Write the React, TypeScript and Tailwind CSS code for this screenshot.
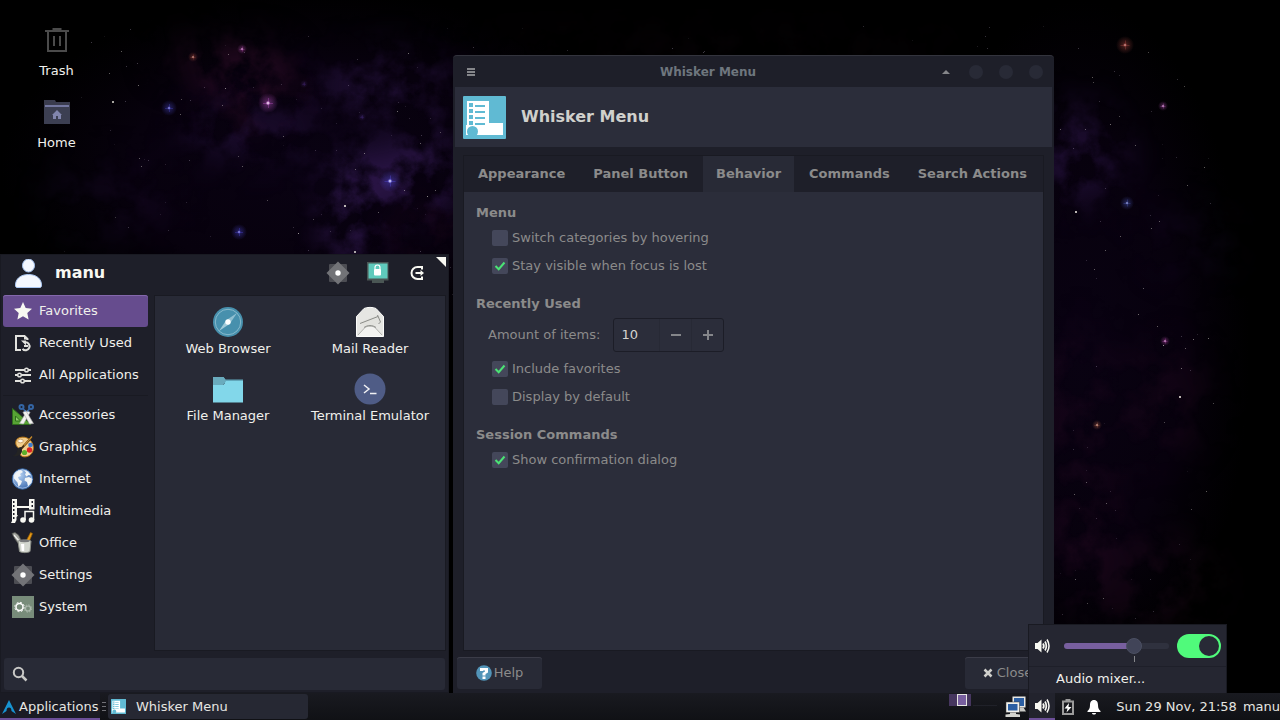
import { useState } from 'react';
import type { ReactNode } from 'react';

type Glow = { x: number; y: number; r: number; color: string };

const brightStars: Glow[] = [
  { x: 268, y: 103, r: 10, color: '#c65ad0' },
  { x: 390, y: 181, r: 11, color: '#5a50e8' },
  { x: 169, y: 108, r: 8, color: '#4a48c8' },
  { x: 242, y: 49, r: 5, color: '#b04aa8' },
  { x: 193, y: 57, r: 5, color: '#a0483c' },
  { x: 239, y: 232, r: 8, color: '#4c48d8' },
  { x: 1125, y: 45, r: 9, color: '#b04a44' },
  { x: 1163, y: 106, r: 5, color: '#b050b0' },
  { x: 1127, y: 203, r: 7, color: '#4a58b8' },
  { x: 1165, y: 341, r: 5, color: '#b048a8' },
  { x: 1097, y: 425, r: 5, color: '#b06048' },
  { x: 304, y: 84, r: 4, color: '#3a2060' },
  { x: 362, y: 117, r: 4, color: '#3a2268' },
];

const smallStars = [
  [112, 101, 0.9], [225, 88, 0.7], [138, 85, 0.6], [121, 51, 0.5], [344, 205, 1], [298, 233, 0.8],
  [354, 251, 0.9], [139, 158, 0.5], [141, 166, 0.5], [408, 53, 0.6], [397, 111, 0.6], [427, 196, 0.7],
  [378, 212, 0.5], [435, 190, 0.5], [404, 190, 0.6], [364, 153, 0.6], [355, 169, 0.5], [283, 136, 0.5],
  [242, 166, 0.5], [180, 114, 0.5], [222, 105, 0.5], [181, 99, 0.4], [109, 73, 0.5], [228, 54, 0.5],
  [420, 143, 0.5], [440, 132, 0.4], [115, 217, 0.3], [238, 156, 0.4], [313, 219, 0.4], [267, 200, 0.4],
  [1075, 211, 1], [1179, 396, 1], [1163, 345, 0.8], [1138, 314, 0.6], [1157, 326, 0.5], [1193, 339, 0.6],
  [1208, 338, 0.6], [1185, 348, 0.5], [1181, 368, 0.6], [1110, 124, 0.6], [1085, 129, 0.5], [1135, 145, 0.5],
  [1187, 185, 0.5], [1204, 167, 0.5], [1151, 228, 0.5], [1159, 221, 0.5], [1120, 236, 0.5], [1105, 250, 0.5],
  [1094, 269, 0.5], [1143, 288, 0.5], [1164, 422, 0.4], [1213, 403, 0.4], [1086, 482, 0.5], [1074, 494, 0.5],
  [1206, 491, 0.5], [1106, 503, 0.5], [1191, 509, 0.4], [1103, 598, 0.5], [1075, 579, 0.5], [1087, 603, 0.4],
  [1092, 77, 0.5], [1093, 82, 0.4], [1184, 86, 0.4], [1148, 52, 0.4], [1119, 116, 0.4], [1060, 129, 0.5],
];

function seeded(seed: number) {
  let s = seed;
  return () => {
    s = (s * 16807) % 2147483647;
    return s / 2147483647;
  };
}

const rand = seeded(421);
const dust = Array.from({ length: 320 }, () => ({
  x: Math.round(60 + rand() * 1150),
  y: Math.round(25 + rand() * 600),
  o: 0.08 + rand() * 0.22,
}));

function Wallpaper() {
  return (
    <svg className="absolute inset-0 h-full w-full" viewBox="0 0 1280 720" preserveAspectRatio="xMidYMid slice" aria-hidden="true">
      <defs>
        <radialGradient id="haze">
          <stop offset="0" stopColor="#090212" />
          <stop offset=".6" stopColor="#07010d" />
          <stop offset="1" stopColor="#05010a" stopOpacity="0" />
        </radialGradient>
        <filter id="soft" x="-100%" y="-100%" width="300%" height="300%" colorInterpolationFilters="sRGB">
          <feGaussianBlur stdDeviation="18" />
        </filter>
        <filter id="clouds" x="0" y="0" width="100%" height="100%" colorInterpolationFilters="sRGB">
          <feTurbulence type="fractalNoise" baseFrequency="0.03" numOctaves="7" seed="11" />
          <feColorMatrix values="0 0 0 0 0.2  0 0 0 0 0.1  0 0 0 0 0.33  3.2 0 0 0 -1.2" />
        </filter>
        <filter id="rose" x="0" y="0" width="100%" height="100%" colorInterpolationFilters="sRGB">
          <feTurbulence type="fractalNoise" baseFrequency="0.03" numOctaves="7" seed="5" />
          <feColorMatrix values="0 0 0 0 0.22  0 0 0 0 0.06  0 0 0 0 0.18  3.2 0 0 0 -1.2" />
        </filter>
        <mask id="purpleMask">
          <g filter="url(#soft)" fill="#fff">
            <ellipse cx="380" cy="178" rx="62" ry="32" opacity=".75" />
            <ellipse cx="430" cy="170" rx="32" ry="50" opacity=".5" />
            <ellipse cx="385" cy="85" rx="75" ry="35" opacity=".45" />
            <ellipse cx="352" cy="225" rx="30" ry="40" opacity=".7" />
            <ellipse cx="250" cy="130" rx="70" ry="30" opacity=".4" />
            <ellipse cx="110" cy="200" rx="70" ry="40" opacity=".15" />
            <ellipse cx="1075" cy="155" rx="50" ry="50" opacity=".45" />
            <ellipse cx="1190" cy="240" rx="50" ry="40" opacity=".1" />
          </g>
        </mask>
        <mask id="roseMask">
          <g filter="url(#soft)" fill="#fff">
            <ellipse cx="250" cy="80" rx="45" ry="38" opacity=".6" />
            <ellipse cx="195" cy="60" rx="40" ry="18" opacity=".3" />
            <ellipse cx="430" cy="235" rx="40" ry="30" opacity=".25" />
            <ellipse cx="1075" cy="460" rx="45" ry="140" opacity=".22" />
            <ellipse cx="1165" cy="400" rx="45" ry="60" opacity=".2" />
            <ellipse cx="1140" cy="580" rx="80" ry="50" opacity=".22" />
            <ellipse cx="700" cy="45" rx="260" ry="10" opacity=".15" />
          </g>
        </mask>
        {brightStars.map((s, i) => (
          <radialGradient id={`star${i}`} key={i}>
            <stop offset="0" stopColor={s.color} />
            <stop offset=".25" stopColor={s.color} stopOpacity=".35" />
            <stop offset="1" stopColor={s.color} stopOpacity="0" />
          </radialGradient>
        ))}
      </defs>
      <rect width="1280" height="720" fill="#000" />
      <ellipse cx="320" cy="170" rx="320" ry="180" fill="url(#haze)" />
      <ellipse cx="1080" cy="350" rx="170" ry="350" fill="url(#haze)" />
      <g mask="url(#purpleMask)">
        <rect width="1280" height="720" filter="url(#clouds)" />
      </g>
      <g mask="url(#roseMask)">
        <rect width="1280" height="720" filter="url(#rose)" />
      </g>
      {dust.map((d, i) => (
        <rect key={i} x={d.x} y={d.y} width="1" height="1" fill="#d8c8e8" opacity={d.o} />
      ))}
      {smallStars.map(([x, y, o], i) => (
        <rect key={i} x={x} y={y} width={o > 0.8 ? 2 : 1} height={o > 0.8 ? 2 : 1} fill="#e8e4dc" opacity={o * 0.8} />
      ))}
      {brightStars.map((s, i) => (
        <g key={i}>
          <circle cx={s.x} cy={s.y} r={s.r} fill={`url(#star${i})`} />
          <path
            d={`M${s.x - s.r / 2} ${s.y + 0.5}h${s.r}M${s.x + 0.5} ${s.y - s.r / 2}v${s.r}`}
            stroke={s.color}
            strokeOpacity=".35"
          />
          {s.r > 4 && <circle cx={s.x} cy={s.y} r={s.r > 9 ? 1.5 : 0.8} fill="#fff" opacity=".6" />}
        </g>
      ))}
    </svg>
  );
}

function TrashIcon() {
  return (
    <svg width="28" height="32" viewBox="0 0 28 32" fill="none" stroke="#4b4b4b" strokeWidth="2" aria-hidden="true">
      <path d="M2 7h24M5 7v20h18V7M10.500 6V5h7v1M11 12v10M17 12v10" />
    </svg>
  );
}

function HomeFolderIcon() {
  return (
    <svg width="28" height="32" viewBox="0 0 28 32" aria-hidden="true">
      <path d="M1 4h11l1 2h14v22H1z" fill="#3a3c4e" />
      <path d="M2 9h24v2H2z" fill="#7377a0" />
      <path d="M1 11h26v16a1 1 0 0 1-1 1H2a1 1 0 0 1-1-1z" fill="#3c3f52" />
      <path d="M14 14l5 5h-1v4h-3v-3h-2v3h-3v-4H9z" fill="#8185ad" />
    </svg>
  );
}

function UserIcon() {
  return (
    <svg width="28" height="32" viewBox="0 0 28 32" aria-hidden="true">
      <g fill="#f4f7fe" stroke="#a9c6f2">
        <ellipse cx="13.500" cy="6.500" rx="6" ry="6.500" />
        <path d="M.5 26c0-6 5-10.500 13-10.500s13 4.500 13 10.500c0 1.500-.3 2.500-1.500 2.500H2C.8 28.500.5 27.500.5 26z" />
      </g>
    </svg>
  );
}

function GearIcon() {
  return (
    <svg width="24" height="24" viewBox="0 0 24 24" aria-hidden="true">
      <rect x="3" y="3" width="18" height="18" rx="1" fill="#4c4d53" />
      <path d="M12 .5L23.500 12 12 23.500.5 12z" fill="#727377" />
      <circle cx="12" cy="12" r="2.700" fill="#fff" />
    </svg>
  );
}

function LockScreenIcon() {
  return (
    <svg width="24" height="24" viewBox="0 0 24 24" aria-hidden="true">
      <path d="M6 19h12v3H6z" fill="#4a5654" />
      <path d="M1 1h21.500v18.500H1z" fill="#4a5654" />
      <path d="M2.500 2.500h19v15h-19z" fill="#5fcabc" />
      <path d="M9 8.500V6.500a2.500 2.500 0 0 1 5 0v2" fill="none" stroke="#fff" strokeWidth="1.200" />
      <rect x="8" y="8" width="7" height="6.500" rx="1" fill="#fff" />
    </svg>
  );
}

function LogoutIcon() {
  return (
    <svg width="24" height="24" viewBox="0 0 24 24" fill="none" stroke="#f8f8f2" strokeWidth="2" aria-hidden="true">
      <path d="M16 8.500V6H11.500A6 6 0 0 0 11.500 18H16V15.500M9.500 12H16" />
      <path d="M14.500 9l3.500 3-3.500 3z" fill="#f8f8f2" stroke="none" />
    </svg>
  );
}

function StarIcon() {
  return (
    <svg width="24" height="24" viewBox="0 0 24 24" aria-hidden="true">
      <path d="M12 3l2.700 5.900 6.300.8-4.700 4.300 1.300 6.500-5.600-3.200-5.600 3.200L7.700 14 3 9.700l6.300-.8z" fill="#f8f8f2" />
    </svg>
  );
}

function RecentIcon() {
  return (
    <svg width="24" height="24" viewBox="0 0 24 24" fill="none" stroke="#e2e2de" strokeWidth="2" aria-hidden="true">
      <path d="M10 19H5V5h8.500l3 3v1" />
      <path d="M13 4.500v4h4z" fill="#e2e2de" stroke="none" />
      <path d="M14 11.300a4 4 0 1 1-2.500 6.500M17 15h-4" />
      <path d="M10 9.500h5v5z" fill="#e2e2de" stroke="none" />
    </svg>
  );
}

function SlidersIcon() {
  return (
    <svg width="24" height="24" viewBox="0 0 24 24" stroke="#e2e2de" strokeWidth="2" fill="#1e1f29" aria-hidden="true">
      <path d="M4 7h16M4 12h16M4 18h16" />
      <circle cx="15.500" cy="7" r="1.800" strokeWidth="1.500" />
      <circle cx="8.500" cy="12" r="1.800" strokeWidth="1.500" />
      <circle cx="11.500" cy="18" r="1.800" strokeWidth="1.500" />
    </svg>
  );
}

function AccessoriesIcon() {
  return (
    <svg width="24" height="24" viewBox="0 0 24 24" fill="none" aria-hidden="true">
      <path d="M1.500 5.500L20 21.500H1.500z" fill="#57a434" stroke="#2f6b1d" />
      <path d="M4.500 13l5 5h-5z" fill="#8fd068" stroke="#2f6b1d" />
      <path d="M8.500 20.500L16.500 7l2.500 2.500L12.500 21z" fill="#f2f2f0" stroke="#a8a8a8" strokeWidth=".6" />
      <path d="M22.500 20.500L14.500 7 12 9.500 18.500 21z" fill="#f2f2f0" stroke="#a8a8a8" strokeWidth=".6" />
      <circle cx="10.500" cy="4" r="2" stroke="#3465a4" strokeWidth="2" />
      <circle cx="20" cy="4" r="2" stroke="#3465a4" strokeWidth="2" />
      <path d="M12 5.500l2.500 3M18.500 5.500l-2 3" stroke="#3465a4" strokeWidth="1.500" />
    </svg>
  );
}

function GraphicsIcon() {
  return (
    <svg width="24" height="24" viewBox="0 0 24 24" aria-hidden="true">
      <path
        d="M5 6c1-4 8-5 12-2.500 5 3 6.500 9 4.500 13.500-2 4.500-8 6-11 4-2.500-2 .5-5-1.500-7C7 12.500 4 11 5 6z"
        fill="#f3cd8b"
        stroke="#b87512"
      />
      <ellipse cx="9.500" cy="6" rx="2.800" ry="1.800" fill="#fff8e8" stroke="#b08040" strokeWidth=".6" />
      <circle cx="19.500" cy="10" r="2.300" fill="#3f7ed0" />
      <circle cx="18.500" cy="15" r="2.700" fill="#dc2424" />
      <circle cx="13.500" cy="17.500" r="2.600" fill="#5cb02a" />
      <path d="M20 3L9.500 14.500" stroke="#4a3010" strokeWidth="2" />
      <path d="M21 1.500L13 10.500" stroke="#c78a2c" strokeWidth="1.200" />
      <path d="M10.500 12c-3 0-4 2-4.500 4.500S4 20 1.500 21c4 1 9-.5 9.500-5z" fill="#242424" />
    </svg>
  );
}

function InternetIcon() {
  return (
    <svg width="24" height="24" viewBox="0 0 24 24" aria-hidden="true">
      <defs>
        <radialGradient id="ocean" cx=".35" cy=".3" r=".8">
          <stop offset="0" stopColor="#b7d2f2" />
          <stop offset="1" stopColor="#3666ad" />
        </radialGradient>
      </defs>
      <circle cx="11.500" cy="12" r="10.200" fill="url(#ocean)" stroke="#3465a4" />
      <path
        d="M2.500 8C4 4.500 7.500 3 10 3l2 2-3 2 1 2-3 1 1 2.500 3 1.500-1 3-2.500 3-1-4.500-3.500-4zM13 3.200l4 1.300 3 4-2.500-.5-2 1.500-1.500-2 1-2zM14 11l4-1 3.500 2-1 4-3.500 3.500-1-4.500-2.500-1.500z"
        fill="#f1f4f6"
      />
      <circle cx="11.500" cy="12" r="9.200" fill="none" stroke="#cfe0f5" strokeOpacity=".6" />
    </svg>
  );
}

function MultimediaIcon() {
  return (
    <svg width="24" height="24" viewBox="0 0 24 24" fill="#f8f8f2" aria-hidden="true">
      <path d="M1 0h5v7h12V0h5.500v10.500H18V9H6v7l1 .5L5.500 18v3l-1.500 3H0l1-2z" />
      <path d="M2 2h1.500v2H2zM2 6h1.500v2H2zM2 10h1.500v2H2zM2 14h1.500v2H2zM2 18h1.500v2H2zM20.500 2H22v2h-1.500zM20.500 6H22v2h-1.500z" fill="#1e1f29" />
      <path d="M14 21v-8.500h8.500V21" fill="none" stroke="#f8f8f2" strokeWidth="1.500" />
      <circle cx="12" cy="21" r="2.800" />
      <circle cx="20.500" cy="21" r="2.800" />
    </svg>
  );
}

function OfficeIcon() {
  return (
    <svg width="24" height="24" viewBox="0 0 24 24" aria-hidden="true">
      <path d="M1 2.500l3-1 3.500 2.500 4 8-3.500 1.500-4-5.500z" fill="#a2a49e" stroke="#555753" strokeWidth=".8" />
      <path d="M3 4l6 7" stroke="#eeeeec" strokeWidth="1.200" />
      <path d="M19.500 1.500l2 1L18 11l-4 1z" fill="#e69a18" stroke="#8f5902" strokeWidth=".7" />
      <path d="M7 10c3-1.500 10-1.500 13 0l-1 10.500c-2 1.500-8.500 1.500-10.500 0z" fill="#d3d7cf" stroke="#8a8d86" />
      <ellipse cx="13.500" cy="10" rx="5" ry="1.200" fill="#77797a" />
      <path d="M10 13l.7 7h2.500v-7z" fill="#fff" />
    </svg>
  );
}

function SystemIcon() {
  return (
    <svg width="24" height="24" viewBox="0 0 24 24" fill="none" aria-hidden="true">
      <rect x="1" y="1" width="22" height="22" fill="#788c7a" />
      <circle cx="8.500" cy="12" r="3.500" stroke="#fff" strokeWidth="1.500" />
      <circle cx="8.500" cy="12" r="4.700" stroke="#fff" strokeWidth="1" strokeDasharray="1.900 1.800" />
      <circle cx="17" cy="13.500" r="2.500" stroke="#aebbaf" strokeWidth="1.200" />
      <circle cx="17" cy="13.500" r="3.600" stroke="#aebbaf" strokeWidth="1" strokeDasharray="1.500 1.300" />
    </svg>
  );
}

function BrowserIcon() {
  return (
    <svg width="32" height="32" viewBox="0 0 32 32" aria-hidden="true">
      <circle cx="16" cy="16" r="15" fill="#4790ad" />
      <circle cx="16" cy="16" r="12.700" fill="none" stroke="#86b9cc" />
      <path d="M25 7l-7 10.500-3.500-3.500z" fill="#8fbfd1" />
      <path d="M7 25l7-10.500 3.500 3.500z" fill="#a3cbd9" />
      <circle cx="16" cy="16" r="2.700" fill="#fff" />
    </svg>
  );
}

function MailIcon() {
  return (
    <svg width="32" height="32" viewBox="0 0 32 32" aria-hidden="true">
      <path d="M2.500 10.500L10 2.500C13 1 19 1 22 2.500l7.500 8v20h-27z" fill="#e6e6e3" stroke="#fbfbfa" />
      <path d="M6 16l18-7 2 1.500 1 5-6 4H9z" fill="#e2e2de" />
      <path d="M6 17.500L24 10.500M23.500 9l3 7-2 2" fill="none" stroke="#8b8c88" />
      <path d="M3 30l9-9.500h8l9 9.500z" fill="#f2f2f0" />
      <path d="M4 29l7-7.500c3-2 7-2 10 0l7 7.500" fill="none" stroke="#b1b2ae" />
      <path d="M10 21.500c3-2.500 9-2.500 12 0" fill="none" stroke="#8b8c88" />
    </svg>
  );
}

function FolderIcon() {
  return (
    <svg width="32" height="32" viewBox="0 0 32 32" aria-hidden="true">
      <path d="M1 4h10.500l2 2.500H31V10H1z" fill="#62a7bb" />
      <path d="M1 12h10.500L14 8h17v21.500H1z" fill="#82d7ea" />
      <path d="M1 4h10.500l2 3-2 5H1z" fill="#6aabbd" />
    </svg>
  );
}

function TerminalIcon() {
  return (
    <svg width="32" height="32" viewBox="0 0 32 32" fill="none" aria-hidden="true">
      <circle cx="16" cy="16" r="15.500" fill="#4f5c86" />
      <path d="M10 12l5 4-5 4M16 20.500h6.500" stroke="#f1f1f4" strokeWidth="1.500" />
    </svg>
  );
}

function WhiskerIcon({ size }: { size: number }) {
  return (
    <svg width={size} height={size} viewBox="0 0 43 43" aria-hidden="true">
      <rect width="43" height="43" rx="1" fill="#60bad3" />
      <path d="M4 5h22v22h14v12H3V29h1z" fill="#fff" />
      <path
        d="M6 7h4v4H6zM6 13h4v4H6zM6 19h4v4H6zM6 25h4v4H6zM12 9h10v2H12zM12 15h10v2H12zM12 21h10v2H12zM12 27h10v2H12z"
        fill="#60bad3"
      />
      <circle cx="9.500" cy="35.500" r="5.500" fill="#60bad3" />
    </svg>
  );
}

function SpeakerIcon() {
  return (
    <svg width="16" height="16" viewBox="0 0 16 16" fill="none" stroke="#f8f8f2" aria-hidden="true">
      <path d="M1 5h2.500l4-3.500v13l-4-3.500H1z" fill="#f8f8f2" stroke="none" />
      <path d="M9 5.500c1 1.500 1 3.500 0 5" strokeWidth="1.800" />
      <path d="M11 3.500c1.800 3 1.800 6 0 9" strokeWidth="1.700" />
      <path d="M13 1.500c2.500 4 2.500 9 0 13" strokeWidth="1.500" />
    </svg>
  );
}

const places = [
  { name: 'Favorites', icon: <StarIcon /> },
  { name: 'Recently Used', icon: <RecentIcon /> },
  { name: 'All Applications', icon: <SlidersIcon /> },
];

const categories = [
  { name: 'Accessories', icon: <AccessoriesIcon /> },
  { name: 'Graphics', icon: <GraphicsIcon /> },
  { name: 'Internet', icon: <InternetIcon /> },
  { name: 'Multimedia', icon: <MultimediaIcon /> },
  { name: 'Office', icon: <OfficeIcon /> },
  { name: 'Settings', icon: <GearIcon /> },
  { name: 'System', icon: <SystemIcon /> },
];

const favorites = [
  { name: 'Web Browser', icon: <BrowserIcon /> },
  { name: 'Mail Reader', icon: <MailIcon /> },
  { name: 'File Manager', icon: <FolderIcon /> },
  { name: 'Terminal Emulator', icon: <TerminalIcon /> },
];

function CategoryButton({ name, icon, active, onClick }: { name: string; icon: ReactNode; active: boolean; onClick: () => void }) {
  return (
    <button
      onClick={onClick}
      className={`flex h-8 w-full items-center gap-1 rounded-[3px] pl-2 text-left ${
        active ? 'bg-[#664c8e] shadow-[inset_0_1px_#8468ac]' : ''
      }`}
    >
      {icon}
      {name}
    </button>
  );
}

function WhiskerMenu() {
  const [category, setCategory] = useState('Favorites');

  return (
    <section className="absolute bottom-0 left-0 flex h-[439px] w-[449px] flex-col border border-[#191a22] bg-[#1e1f29] text-[#f0f0ec]">
      <header className="flex h-10 shrink-0 items-center pl-[14px]">
        <UserIcon />
        <h2 className="ml-3 flex-1 pb-1 text-base font-bold text-[#f8f8f2]">manu</h2>
        <div className="flex gap-4 pr-[18px] pb-1">
          <button aria-label="All Settings"><GearIcon /></button>
          <button aria-label="Lock Screen"><LockScreenIcon /></button>
          <button aria-label="Log Out"><LogoutIcon /></button>
        </div>
      </header>
      <svg className="absolute top-0.5 right-0.5" width="10" height="10" viewBox="0 0 10 10" aria-hidden="true">
        <path d="M0 0h10v10z" fill="#f8f8f2" />
      </svg>
      <div className="flex min-h-0 flex-1 pr-0.5 pl-0.5">
        <nav className="w-[145px] shrink-0">
          {places.map((p) => (
            <CategoryButton key={p.name} {...p} active={category === p.name} onClick={() => setCategory(p.name)} />
          ))}
          <hr className="mt-1 mb-[3px] border-[#191a22]" />
          {categories.map((c) => (
            <CategoryButton key={c.name} {...c} active={category === c.name} onClick={() => setCategory(c.name)} />
          ))}
        </nav>
        <div className="ml-1.5 grid flex-1 grid-cols-2 content-start border border-[#191a22] bg-[#282a36] pr-1 pl-0.5 pt-2.5">
          {favorites.map((app) => (
            <button key={app.name} className="flex h-[67px] flex-col items-center gap-[3px] leading-4 whitespace-nowrap">
              {app.icon}
              {app.name}
            </button>
          ))}
        </div>
      </div>
      <div className="mx-[3px] mt-[7px] mb-0.5 flex h-8 shrink-0 items-center rounded-[3px] bg-[#282a36] pl-2">
        <svg width="16" height="16" viewBox="0 0 16 16" fill="none" stroke="#c8c8c6" strokeWidth="2" aria-hidden="true">
          <circle cx="6.500" cy="6.500" r="4.700" />
          <path d="M10 10l4.500 4.500" strokeWidth="2.500" />
        </svg>
        <input aria-label="Search" className="ml-2 flex-1 bg-transparent outline-none" />
      </div>
    </section>
  );
}

function CheckRow({ label, checked = false }: { label: string; checked?: boolean }) {
  return (
    <label className="ml-4 flex h-7 w-fit items-center gap-1">
      <span className="grid h-4 w-4">
        <input
          type="checkbox"
          defaultChecked={checked}
          className="peer col-start-1 row-start-1 h-4 w-4 appearance-none rounded-[2px] bg-[#44475a]"
        />
        <svg className="invisible col-start-1 row-start-1 peer-checked:visible" width="16" height="16" viewBox="0 0 16 16" aria-hidden="true">
          <path d="M3.500 8l3.200 3.200L12.500 4.500" fill="none" stroke="#4be375" strokeWidth="2" />
        </svg>
      </span>
      {label}
    </label>
  );
}

function Section({ title, children }: { title: string; children: ReactNode }) {
  return (
    <section className="mb-4">
      <h3 className="mb-[3px] h-4 leading-4 font-bold">{title}</h3>
      {children}
    </section>
  );
}

const tabs = ['Appearance', 'Panel Button', 'Behavior', 'Commands', 'Search Actions'];

function SettingsWindow() {
  const [tab, setTab] = useState('Behavior');
  const [amount, setAmount] = useState(10);

  return (
    <section className="absolute bottom-0 left-[453px] flex h-[638px] w-[601px] flex-col rounded-t-[4px] border-t border-[#33343d] bg-[#1e1f29] text-[#8b8b8b]">
      <header className="flex h-[31px] shrink-0 items-center">
        <button aria-label="Window menu" className="flex w-[27px] justify-center pl-[9px]">
          <svg width="8" height="8" viewBox="0 0 8 8" aria-hidden="true">
            <path d="M0 0h8v2H0zM0 3h8v2H0zM0 6h8v2H0z" fill="#85868a" />
          </svg>
        </button>
        <h1 className="flex-1 text-center text-xs font-bold text-[#6e767e]">Whisker Menu</h1>
        <div className="flex items-center gap-4 pr-[11px] pl-1.5">
          <button aria-label="Shade" className="mr-[3px]">
            <svg width="8" height="4" viewBox="0 0 8 4" aria-hidden="true"><path d="M0 4l4-4 4 4z" fill="#85868a" /></svg>
          </button>
          <button aria-label="Minimize" className="h-3.5 w-3.5 rounded-full bg-[#282a36]" />
          <button aria-label="Maximize" className="h-3.5 w-3.5 rounded-full bg-[#282a36]" />
          <button aria-label="Close window" className="h-3.5 w-3.5 rounded-full bg-[#282a36]" />
        </div>
      </header>
      <div className="mx-0.5 flex h-[60px] shrink-0 items-center gap-[15px] bg-[#2b2d3a] pl-2">
        <WhiskerIcon size={43} />
        <h2 className="text-base font-bold text-[#d0d0cc]">Whisker Menu</h2>
      </div>
      <div className="mx-2.5 mt-2 flex flex-1 flex-col border border-[#191a22]">
        <div role="tablist" className="flex h-9 shrink-0 gap-0.5 pl-px">
          {tabs.map((t) => (
            <button
              key={t}
              role="tab"
              aria-selected={t === tab}
              onClick={() => setTab(t)}
              className={`px-[13px] font-bold whitespace-nowrap ${t === tab ? 'bg-[#282a36]' : ''}`}
            >
              {t}
            </button>
          ))}
        </div>
        <div role="tabpanel" className="flex-1 bg-[#2b2d3a] px-3 pt-[13px]">
          <Section title="Menu">
            <CheckRow label="Switch categories by hovering" />
            <CheckRow label="Stay visible when focus is lost" checked />
          </Section>
          <Section title="Recently Used">
            <div className="mt-1.5 mb-[3px] ml-3 flex items-center gap-[13px]">
              <label htmlFor="amount">Amount of items:</label>
              <div className="flex h-[34px] rounded-[3px] border border-[#1c1d27]">
                <input
                  id="amount"
                  value={amount}
                  onChange={(e) => setAmount(Number(e.target.value) || 0)}
                  className="w-[45px] bg-transparent pl-[7px] text-[#d4d4d0] outline-none"
                />
                <button aria-label="Decrease" onClick={() => setAmount(amount - 1)} className="grid w-8 place-items-center border-l border-[#272935]">
                  <svg width="10" height="10" viewBox="0 0 10 10" aria-hidden="true"><path d="M0 4h10v2H0z" fill="#85868a" /></svg>
                </button>
                <button aria-label="Increase" onClick={() => setAmount(amount + 1)} className="grid w-8 place-items-center border-l border-[#272935]">
                  <svg width="10" height="10" viewBox="0 0 10 10" aria-hidden="true"><path d="M0 4h4V0h2v4h4v2H6v4H4V6H0z" fill="#85868a" /></svg>
                </button>
              </div>
            </div>
            <CheckRow label="Include favorites" checked />
            <CheckRow label="Display by default" />
          </Section>
          <Section title="Session Commands">
            <CheckRow label="Show confirmation dialog" checked />
          </Section>
        </div>
      </div>
      <footer className="flex shrink-0 justify-between px-1 pt-1.5 pb-1">
        <button className="flex h-8 w-[85px] items-center justify-center gap-0.5 rounded-[3px] bg-[#282a36] shadow-[inset_0_1px_#3b3c48]">
          <svg width="16" height="16" viewBox="0 0 16 16" aria-hidden="true">
            <circle cx="8" cy="8" r="7.800" fill="#5294b8" />
            <path d="M4 6V3h8v4.500L9.500 9v1.500H6.500V8L9 6.500v-1H7V6zM6.500 11.500h3V14h-3z" fill="#fff" />
          </svg>
          Help
        </button>
        <button className="flex h-8 w-[85px] items-center justify-center gap-1 rounded-[3px] bg-[#282a36] shadow-[inset_0_1px_#3b3c48]">
          <svg width="10" height="10" viewBox="0 0 10 10" aria-hidden="true">
            <path d="M1.500 1.500l7 7M8.500 1.500l-7 7" stroke="#d0d0cc" strokeWidth="2.500" />
          </svg>
          Close
        </button>
      </footer>
    </section>
  );
}

function VolumePopup() {
  const [volume, setVolume] = useState(70);
  const fill = `linear-gradient(to right, #785f9f ${volume}%, #2f313e ${volume}%)`;

  return (
    <section className="absolute right-[53px] bottom-0 h-[69px] w-[199px] border border-b-0 border-[#191a22] bg-[#252631] text-[#f0f0ec]">
      <div className="flex h-[42px] items-center border-b border-[#1e1f29] pr-[5px] pl-[5px]">
        <SpeakerIcon />
        <div className="relative mr-2 ml-3.5 flex h-6 flex-1 items-center">
          <input
            type="range"
            aria-label="Volume"
            value={volume}
            onChange={(e) => setVolume(Number(e.target.value))}
            style={{ background: fill }}
            className="h-1.5 w-full appearance-none rounded-full [&::-webkit-slider-thumb]:h-4 [&::-webkit-slider-thumb]:w-4 [&::-webkit-slider-thumb]:appearance-none [&::-webkit-slider-thumb]:rounded-full [&::-webkit-slider-thumb]:border [&::-webkit-slider-thumb]:border-[#4b4f62] [&::-webkit-slider-thumb]:bg-[#414458]"
          />
          <span className="absolute top-[22px] left-2/3 h-1.5 w-px bg-[#85868a]" />
        </div>
        <input
          type="checkbox"
          role="switch"
          aria-label="Sound on"
          defaultChecked
          className="flex h-6 w-11 appearance-none items-center rounded-full bg-[#414458] px-0.5 before:h-5 before:w-5 before:rounded-full before:bg-[#282a36] checked:justify-end checked:bg-[#50fa7b]"
        />
      </div>
      <button className="flex h-6 w-full items-center pl-[27px]">Audio mixer...</button>
    </section>
  );
}

function NetworkIcon() {
  return (
    <svg width="22" height="22" viewBox="0 0 22 22" aria-hidden="true">
      <path d="M7.500.5h13v11h-13z" fill="#e8e8e4" />
      <path d="M9 2h10v8H9z" fill="#2c5fa3" />
      <path d="M14.500 11.500h4l2.500 4h-6.500z" fill="#c9c9c5" />
      <path d="M1 6h13.500v10.500H1z" fill="#f1f1ed" stroke="#383838" strokeWidth=".5" />
      <path d="M3 8h9.500v6.500H3z" fill="#2c5fa3" />
      <path d="M5 16.500h6V18l4 .5V21H.5v-2.500L5 18z" fill="#d4d4cf" />
    </svg>
  );
}

function Taskbar() {
  return (
    <footer className="relative flex h-[27px] shrink-0 items-stretch bg-linear-to-b from-[#191a20] to-[#101115] text-[#e6e6e2]">
      <button className="flex w-[100px] items-center gap-[3px] border-b-2 border-[#6c4f98] bg-[#1a1b24] pt-0.5 pl-0.5 whitespace-nowrap">
        <svg width="14" height="14" viewBox="0 0 14 14" aria-hidden="true">
          <path d="M7 0l7 14-4.500-3c0-2.500-1-3.500-2.500-3.500S4.500 8.500 4.500 11L0 14z" fill="#1793d1" />
        </svg>
        Applications
      </button>
      <svg className="mx-0.5 self-center" width="4" height="10" viewBox="0 0 4 10" aria-hidden="true">
        <path d="M0 0h4v1H0zM0 4h4v1H0zM0 8h4v1H0z" fill="#707076" />
      </svg>
      <button className="my-px flex w-[200px] items-center gap-2.5 rounded-[3px] bg-[#262833] pl-[3px]">
        <WhiskerIcon size={15} />
        Whisker Menu
      </button>
      <div className="ml-auto flex items-stretch">
        <button aria-label="Workspaces" className="mt-px grid w-12 grid-cols-2 grid-rows-2 self-start">
          <span className="flex h-3 w-[22px] justify-end bg-[#46365f] pr-1">
            <span className="h-full w-2.5 border border-[#e6e6e2] bg-[#785f9f]" />
          </span>
          <span className="h-3 border-b border-[#202129]" />
        </button>
        <button aria-label="Network" className="ml-2 flex w-6 items-center"><NetworkIcon /></button>
        <button aria-label="Sound" className="flex w-[26px] items-center justify-center border-b-2 border-[#6c4f98] bg-[#22232d]">
          <SpeakerIcon />
        </button>
        <button aria-label="Battery" className="flex w-[26px] items-center justify-center">
          <svg width="12" height="16" viewBox="0 0 12 16" aria-hidden="true">
            <path d="M3.500 0h5v1.500H12V16H0V1.500h3.500z" fill="#9b9b9b" />
            <path d="M2 3.500h8V14H2z" fill="#17181d" />
            <path d="M7 4L2.500 9.500H5.500L4.500 13.500 9.500 8H6.500z" fill="#fff" />
          </svg>
        </button>
        <button aria-label="Notifications" className="flex w-[26px] items-center justify-center">
          <svg width="14" height="16" viewBox="0 0 14 16" aria-hidden="true">
            <path d="M7 1c3 0 4 2.500 4 5 0 3.500 1 4.500 2.500 6v1H.5v-1C2 10.500 3 9.500 3 6c0-2.500 1-5 4-5zM5 14h4c0 1-1 1.500-2 1.500S5 15 5 14z" fill="#fff" />
          </svg>
        </button>
        <button className="ml-[9px] whitespace-nowrap">Sun 29 Nov, 21:58</button>
        <button className="ml-1.5">manu</button>
      </div>
    </footer>
  );
}

function DesktopIcon({ name, icon }: { name: string; icon: ReactNode }) {
  return (
    <button className="flex h-[72px] w-20 flex-col items-center gap-[7px] text-[#f0f0ec]">
      {icon}
      {name}
    </button>
  );
}

function App() {
  return (
    <div className="relative flex h-screen flex-col overflow-hidden bg-black font-['DejaVu_Sans',sans-serif] text-[13px] leading-4">
      <Wallpaper />
      <main className="relative flex-1">
        <div className="flex w-[113px] flex-col items-center pt-6">
          <DesktopIcon name="Trash" icon={<TrashIcon />} />
          <DesktopIcon name="Home" icon={<HomeFolderIcon />} />
        </div>
        <SettingsWindow />
        <WhiskerMenu />
        <VolumePopup />
      </main>
      <Taskbar />
    </div>
  );
}

export default App;
